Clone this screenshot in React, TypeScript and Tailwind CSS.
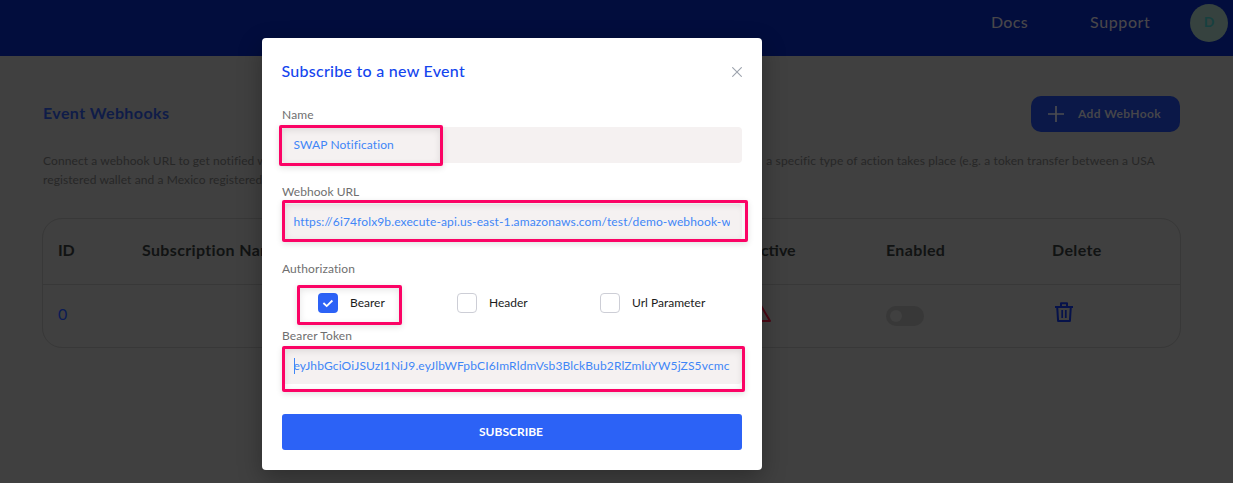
import type { ReactNode } from "react";

function Label({ children, className = "" }: { children: ReactNode; className?: string }) {
  return <div className={`h-5 text-xs leading-5 text-[#6f6f6f] ${className}`}>{children}</div>;
}

function Field({ children, mark }: { children: ReactNode; mark: string }) {
  return (
    <div className="relative mt-0.5 h-9 rounded bg-[#f5f1f1] pl-[11.5px] pr-3">
      <div className="h-full overflow-hidden whitespace-nowrap text-xs leading-9 text-[#3f86f7]">{children}</div>
      <Mark className={mark} />
    </div>
  );
}

function Mark({ className }: { className: string }) {
  return (
    <div
      className={`absolute rounded-[2px] border-3 border-[#fb0365] shadow-[0_2px_6px_rgba(0,0,0,0.12),inset_0_2px_7px_rgba(0,0,0,0.1)] ${className}`}
    />
  );
}

function Option({ label, checked, className }: { label: string; checked?: boolean; className: string }) {
  return (
    <div className={`flex items-center ${className}`}>
      {checked ? (
        <span className="flex size-5 items-center justify-center rounded bg-[#2c62f6]">
          <svg className="size-3" viewBox="0 0 12 12" fill="none" stroke="white" strokeWidth="1.8">
            <path d="M1.4 6 4.7 9.1l5.7-5.6" />
          </svg>
        </span>
      ) : (
        <span className="size-5 rounded border border-[#cdced6] bg-white" />
      )}
      <span className="ml-3 text-xs leading-5 text-[#1b1b1b]">{label}</span>
    </div>
  );
}

function Modal() {
  return (
    <div className="absolute left-[262px] top-[38px] flex h-[432px] w-[500px] flex-col rounded bg-white px-5 pt-[21px] shadow-[0_8px_24px_rgba(0,0,0,0.3)]">
      <div className="flex items-center justify-between">
        <h2 className="-ml-[0.5px] text-base font-medium leading-6 tracking-[0.27px] text-[#1445ee]">
          Subscribe to a new Event
        </h2>
        <svg className="mt-0.5 size-[10px]" viewBox="0 0 10 10" stroke="#9da3ad" strokeWidth="1.1">
          <path d="M0.3 0.3 9.7 9.7M9.7 0.3 0.3 9.7" />
        </svg>
      </div>
      <Label className="mt-[22px] tracking-[0.15px]">Name</Label>
      <Field mark="-left-[3px] -top-[2px] h-[41px] w-[164px]">
        <span className="tracking-[0.1px]">SWAP Notification</span>
      </Field>
      <Label className="mt-[19px] tracking-[0.05px]">Webhook URL</Label>
      <Field mark="left-0 -top-[4px] h-[42px] w-[466px]">
        <span className="tracking-[0.13px]">
          https://6i74folx9b.execute-api.us-east-1.amazonaws.com/test/demo-webhook-w
        </span>
      </Field>
      <Label className="mt-[19px] tracking-[0.1px]">Authorization</Label>
      <div className="relative mt-[14px] flex pl-9">
        <Option label="Bearer" checked className="w-[139px]" />
        <Option label="Header" className="w-[143px]" />
        <Option label="Url Parameter" className="" />
        <Mark className="-top-[8px] left-[15px] h-[40px] w-[105px]" />
      </div>
      <Label className="mt-[13px] tracking-[0.14px]">Bearer Token</Label>
      <Field mark="left-0 -top-[2px] h-[46px] w-[463px]">
        <span className="flex h-full items-center tracking-[0.14px]">
          <span className="h-4 w-px shrink-0 bg-[#3f86f7]" />
          <span className="-ml-px">eyJhbGciOiJSUzI1NiJ9.eyJlbWFpbCI6ImRldmVsb3BlckBub2RlZmluYW5jZS5vcmc</span>
        </span>
      </Field>
      <button className="mt-[30px] h-9 w-full rounded-[3px] bg-[#2c62f6] pr-0.5 text-xs font-bold text-white">
        SUBSCRIBE
      </button>
    </div>
  );
}

function TrashIcon() {
  return (
    <svg className="h-5 w-[18px]" viewBox="0 0 18 20" fill="none" stroke="#06124a" strokeWidth="2" strokeLinejoin="round">
      <path d="M0 5h18M6 5V1.2h6V5M2.2 5l.9 14h11.8l.9-14" />
      <path d="M7.2 8v8M10.8 8v8" strokeWidth="1.7" />
    </svg>
  );
}

export default function App() {
  return (
    <div className="relative h-[483px] w-[1233px] overflow-hidden bg-[#404040] font-[Lato,sans-serif]">
      <header className="flex h-14 justify-end bg-[#020d3d] pr-[5px] pt-1">
        <nav className="flex h-[38px] items-center text-base font-medium leading-6 text-[#48464a]">
          <span className="w-[99px] pb-0.5 tracking-[0.3px]">Docs</span>
          <span className="w-[100px] pb-0.5 tracking-[0.6px]">Support</span>
          <span className="flex size-[38px] items-center justify-center rounded-full bg-[#36423f] pb-0.5 text-sm font-bold text-[#17403f]">
            D
          </span>
        </nav>
      </header>
      <main className="ml-[42px] w-[1139px] pt-10">
        <div className="flex h-9 items-center justify-between pr-px">
          <h1 className="pb-[3px] pl-px text-base font-bold tracking-[0.4px] text-[#0f1c48]">Event Webhooks</h1>
          <button className="flex h-9 w-[149px] items-center rounded-[10px] bg-[#0b1848] pl-[17px] text-xs font-bold tracking-[0.38px] text-[#46464a]">
            <svg className="mr-[14px] size-4" viewBox="0 0 16 16" stroke="#4c4c50" strokeWidth="1.7">
              <path d="M8 0v16M0 8h16" />
            </svg>
            Add WebHook
          </button>
        </div>
        <div className="mt-[19px] pl-px text-xs leading-[19px] tracking-[0.09px] text-[#272727]">
          <div className="flex justify-between pr-[26px]">
            <span>Connect a webhook URL to get notified when</span>
            <span className="tracking-[0.113px]">
              a specific type of action takes place (e.g. a token transfer between a USA
            </span>
          </div>
          <div>registered wallet and a Mexico registered wallet).</div>
        </div>
        <section className="mt-[29px] h-[130px] rounded-[20px] border border-[#383838] text-base text-[#111313]">
          <div className="flex h-[66px] items-center border-b border-[#383838] pb-1 pl-[15px] font-bold tracking-[0.35px]">
            <span className="w-[84px] tracking-[-0.3px]">ID</span>
            <span className="w-[608px]">Subscription Name</span>
            <span className="w-[136px] tracking-normal">Active</span>
            <span className="w-[166px]">Enabled</span>
            <span>Delete</span>
          </div>
          <div className="flex h-[62px] items-center pl-[15px]">
            <span className="w-[691px] pb-1 text-[#0b1b55]">0</span>
            <span className="w-[137px] pb-2">
              <svg className="h-[19px] w-[22px]" viewBox="0 0 22 19" fill="none" stroke="#4b0714" strokeWidth="2" strokeLinejoin="round">
                <path d="M11 1 21 18H1Z" />
              </svg>
            </span>
            <span className="mr-[131px] flex h-5 w-[38px] items-center rounded-full bg-[#383838] pl-1">
              <span className="size-3 rounded-full bg-[#404040]" />
            </span>
            <span className="pb-2">
              <TrashIcon />
            </span>
          </div>
        </section>
      </main>
      <Modal />
    </div>
  );
}
